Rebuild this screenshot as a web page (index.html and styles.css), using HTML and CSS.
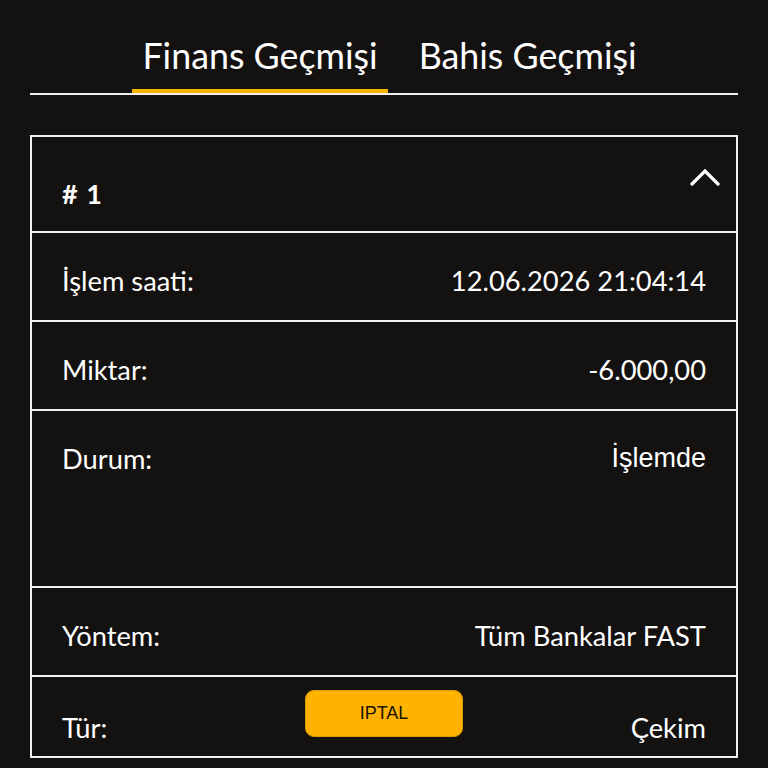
FILE: index.html
```html
<!DOCTYPE html>
<html lang="tr">
<head>
<meta charset="utf-8">
<title>Finans Geçmişi</title>
<link rel="stylesheet" href="styles.css">
</head>
<body>
<div class="page">
  <nav class="tabs">
    <div class="tab active">Finans Geçmişi</div>
    <div class="tab">Bahis Geçmişi</div>
  </nav>
  <section class="card">
    <div class="card-head">
      <span class="num"># 1</span>
      <svg class="chev" width="30" height="17" viewBox="0 0 30 17"><polyline points="2,15 15,2 28,15" fill="none" stroke="#fff" stroke-width="3.2" stroke-linecap="round" stroke-linejoin="miter"/></svg>
    </div>
    <div class="row"><span>İşlem saati:</span><span>12.06.2026 21:04:14</span></div>
    <div class="row"><span>Miktar:</span><span>-6.000,00</span></div>
    <div class="row tall"><span>Durum:</span><span class="arial">İşlemde</span></div>
    <div class="row"><span>Yöntem:</span><span>Tüm Bankalar FAST</span></div>
    <div class="row last">
      <span class="lbl">Tür:</span>
      <button class="cancel">IPTAL</button>
      <span class="val">Çekim</span>
    </div>
  </section>
</div>
</body>
</html>
```
FILE: styles.css
```css
html, body {
  margin: 0;
  padding: 0;
  background: #141111;
}
body {
  font-family: Lato, "Open Sans", sans-serif;
  color: #fff;
}
.page {
  padding: 0 30px;
}
.tabs {
  display: flex;
  justify-content: center;
  gap: 21px;
  border-bottom: 2px solid #f2f2f2;
  padding-left: 11px;
}
.tab {
  font-size: 35.8px;
  line-height: 42px;
  padding: 35px 10px 12px;
  border-bottom: 4px solid transparent;
}
.tab.active {
  border-bottom-color: #f7b500;
}
.card {
  margin-top: 40px;
  border: 2px solid #f2f2f2;
}
.card-head {
  height: 94px;
  box-sizing: border-box;
  display: flex;
  justify-content: space-between;
  align-items: flex-start;
  padding: 0 16px 0 30px;
}
.num {
  font-weight: 700;
  font-size: 27px;
  line-height: 30px;
  margin-top: 42px;
  word-spacing: 2px;
}
.chev {
  margin-top: 32px;
}
.row {
  border-top: 2px solid #f2f2f2;
  height: 89px;
  box-sizing: border-box;
  display: flex;
  justify-content: space-between;
  align-items: flex-start;
  padding: 32px 30px 0;
  font-size: 27.3px;
  line-height: 31px;
}
.row.tall {
  height: 177px;
}
.arial {
  font-family: "Liberation Sans", Arial, sans-serif;
  font-size: 27px;
}
.row.last {
  height: 81px;
  display: grid;
  grid-template-columns: 1fr auto 1fr;
  padding: 13px 30px;
}
.lbl, .val {
  align-self: end;
}
.val {
  text-align: right;
}
.cancel {
  align-self: start;
  width: 158px;
  height: 47px;
  border: 1px solid #d99a00;
  border-radius: 9px;
  background: #ffb300;
  color: #1a1200;
  font-family: "Liberation Sans", Arial, sans-serif;
  font-size: 18px;
  padding: 0;
}
```
